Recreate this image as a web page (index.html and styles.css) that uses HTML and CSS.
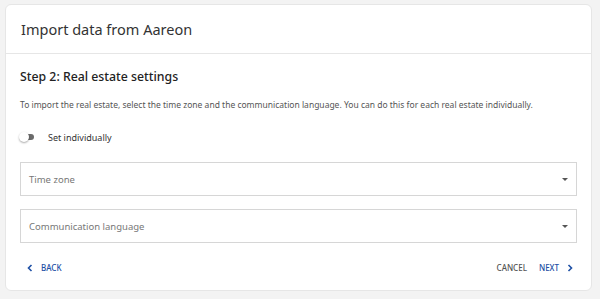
FILE: index.html
```html
<!DOCTYPE html>
<html lang="en">
<head>
  <meta charset="UTF-8">
  <title>Import data from Aareon</title>
  <link rel="stylesheet" href="styles.css">
</head>
<body>

  <div class="dialog">
    <div class="dialog-header">
      <h1>Import data from Aareon</h1>
    </div>

    <div class="dialog-body">
      <h2>Step 2: Real estate settings</h2>
      <p class="hint">To import the real estate, select the time zone and the communication language. You can do this for each real estate individually.</p>

      <!-- toggle -->
      <label class="switch-row">
        <span class="switch"><span class="thumb"></span></span>
        <span>Set individually</span>
      </label>

      <div class="select">
        <span>Time zone</span>
        <span class="caret"></span>
      </div>
      <div class="select">
        <span>Communication language</span>
        <span class="caret"></span>
      </div>

      <div class="actions">
        <button class="btn btn-blue btn-back">
          <svg width="8" height="8" viewBox="0 0 8 8"><path d="M5.5 1 L2.5 4 L5.5 7" fill="none" stroke="currentColor" stroke-width="1.6"/></svg>
          BACK
        </button>
        <div class="right">
          <button class="btn btn-grey">CANCEL</button>
          <button class="btn btn-blue">
            NEXT
            <svg width="8" height="8" viewBox="0 0 8 8"><path d="M2.5 1 L5.5 4 L2.5 7" fill="none" stroke="currentColor" stroke-width="1.6"/></svg>
          </button>
        </div>
      </div>
    </div>
  </div>

</body>
</html>
```

FILE: styles.css
```css
body {
  margin: 0;
  background-color: #f3f3f3;
  font-family: "Noto Sans", Lato, sans-serif;
  color: #333;
}

.dialog {
  margin: 4px 8px 0 5px;
  height: 287px;
  background-color: white;
  border: 1px solid #e6e6e6;
  border-radius: 6px;
  box-sizing: border-box;
}

.dialog-header {
  height: 48px;
  border-bottom: 1px solid #e6e6e6;
  display: flex;
  align-items: center;
  padding: 0 15px;
}

.dialog-header h1 {
  margin: 0;
  font-size: 14.5px;
  font-weight: 400;
  color: #333;
}

.dialog-body {
  padding: 14px 14px 0 14px;
}

.dialog-body h2 {
  margin: 0;
  font-size: 12.3px;
  font-weight: 500;
  color: #222;
  line-height: 18px;
}

.hint {
  margin: 13px 0 0 0;
  font-size: 8.5px;
  color: #555;
  line-height: 12px;
}

.switch-row {
  display: flex;
  align-items: center;
  gap: 14px;
  margin-top: 19px;
  font-size: 9px;
  color: #333;
  height: 14px;
}

.switch {
  position: relative;
  width: 13px;
  height: 6px;
  background-color: #6b6b6b;
  border-radius: 3px;
  margin-left: 1px;
}

.switch .thumb {
  position: absolute;
  left: -2px;
  top: -2px;
  width: 10px;
  height: 10px;
  border-radius: 50%;
  background-color: white;
  box-shadow: 0 1px 2px rgba(0, 0, 0, 0.35);
}

.select {
  display: flex;
  align-items: center;
  justify-content: space-between;
  height: 34px;
  border: 1px solid #d6d6d6;
  box-sizing: border-box;
  padding: 0 8px 0 8px;
  font-size: 9.5px;
  color: #777;
  margin-top: 18px;
}

.select + .select {
  margin-top: 13px;
}

.caret {
  width: 0;
  height: 0;
  border-left: 3px solid transparent;
  border-right: 3px solid transparent;
  border-top: 3px solid #555;
}

.actions {
  display: flex;
  justify-content: space-between;
  align-items: center;
  margin-top: 17px;
}

.actions .right {
  display: flex;
  gap: 6px;
}

.btn {
  background: none;
  border: none;
  padding: 2px 3px;
  font-family: inherit;
  font-size: 8px;
  font-weight: 500;
  display: flex;
  align-items: center;
  gap: 7px;
  cursor: pointer;
}

.btn-back {
  padding-left: 6px;
}

.btn-blue {
  color: #1d4fa5;
}

.btn-grey {
  color: #555;
}
```
